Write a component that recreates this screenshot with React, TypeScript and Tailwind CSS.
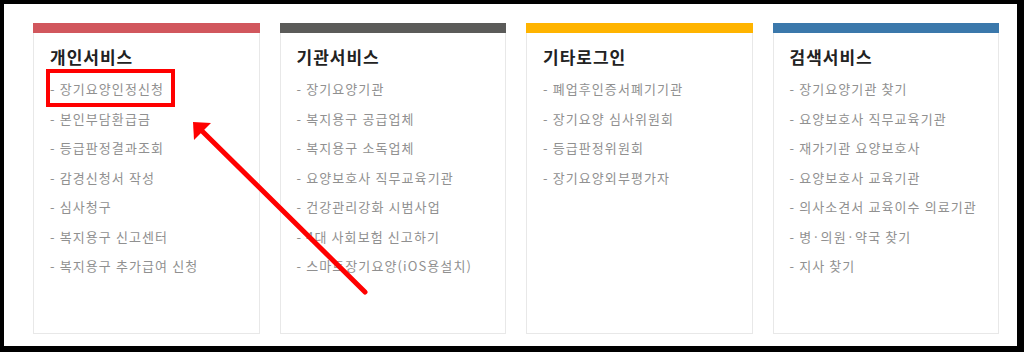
import React from 'react';

const columns = [
  {
    title: '개인서비스',
    bar: 'bg-[#d1575d]',
    items: ['장기요양인정신청', '본인부담환급금', '등급판정결과조회', '감경신청서 작성', '심사청구', '복지용구 신고센터', '복지용구 추가급여 신청'],
  },
  {
    title: '기관서비스',
    bar: 'bg-[#5b5b59]',
    items: ['장기요양기관', '복지용구 공급업체', '복지용구 소독업체', '요양보호사 직무교육기관', '건강관리강화 시범사업', '4대 사회보험 신고하기', '스마트장기요양(iOS용설치)'],
  },
  {
    title: '기타로그인',
    bar: 'bg-[#ffb400]',
    items: ['폐업후인증서폐기기관', '장기요양 심사위원회', '등급판정위원회', '장기요양외부평가자'],
  },
  {
    title: '검색서비스',
    bar: 'bg-[#3b78ab]',
    items: ['장기요양기관 찾기', '요양보호사 직무교육기관', '재가기관 요양보호사', '요양보호사 교육기관', '의사소견서 교육이수 의료기관', '병·의원·약국 찾기', '지사 찾기'],
  },
];

function ServiceCard({ title, bar, items }: { title: string; bar: string; items: string[] }) {
  return (
    <div className="flex h-[311px] flex-col">
      <div className={`h-[10px] ${bar}`} />
      <div className="flex-1 border-x border-b border-[#e8e8e8] bg-white px-[16px] pt-[12px]">
        <h3 className="text-[17px] font-bold leading-[24px] tracking-[1px] text-[#222]">{title}</h3>
        <ul className="mt-[5px]">
          {items.map((item) => (
            <li key={item} className="whitespace-nowrap text-[13px] leading-[29.5px] tracking-[1.1px] text-[#909090]">
              - {item}
            </li>
          ))}
        </ul>
      </div>
    </div>
  );
}

export default function App() {
  return (
    <div
      className="relative h-[352px] w-[1024px] bg-black pb-[6px] pl-[4px] pr-[7px] pt-[4px]"
      style={{ fontFamily: '"Noto Sans CJK KR", "Noto Sans", sans-serif' }}
    >
      <div className="h-full bg-white pl-[29px] pr-[18px] pt-[19px]">
        <div className="grid grid-cols-4 gap-[20px]">
          {columns.map((col) => (
            <ServiceCard key={col.title} {...col} />
          ))}
        </div>
      </div>

      {/* highlight box */}
      <div className="absolute left-[46px] top-[69px] h-[38px] w-[129px] border-4 border-[#ff0000]" />

      {/* arrow */}
      <svg className="pointer-events-none absolute left-0 top-0" width="1024" height="352">
        <line x1="365" y1="292" x2="200" y2="129" stroke="#ff0000" strokeWidth="5" strokeLinecap="round" />
        <polygon points="193,122 211,123 194,140" fill="#ff0000" />
      </svg>
    </div>
  );
}
